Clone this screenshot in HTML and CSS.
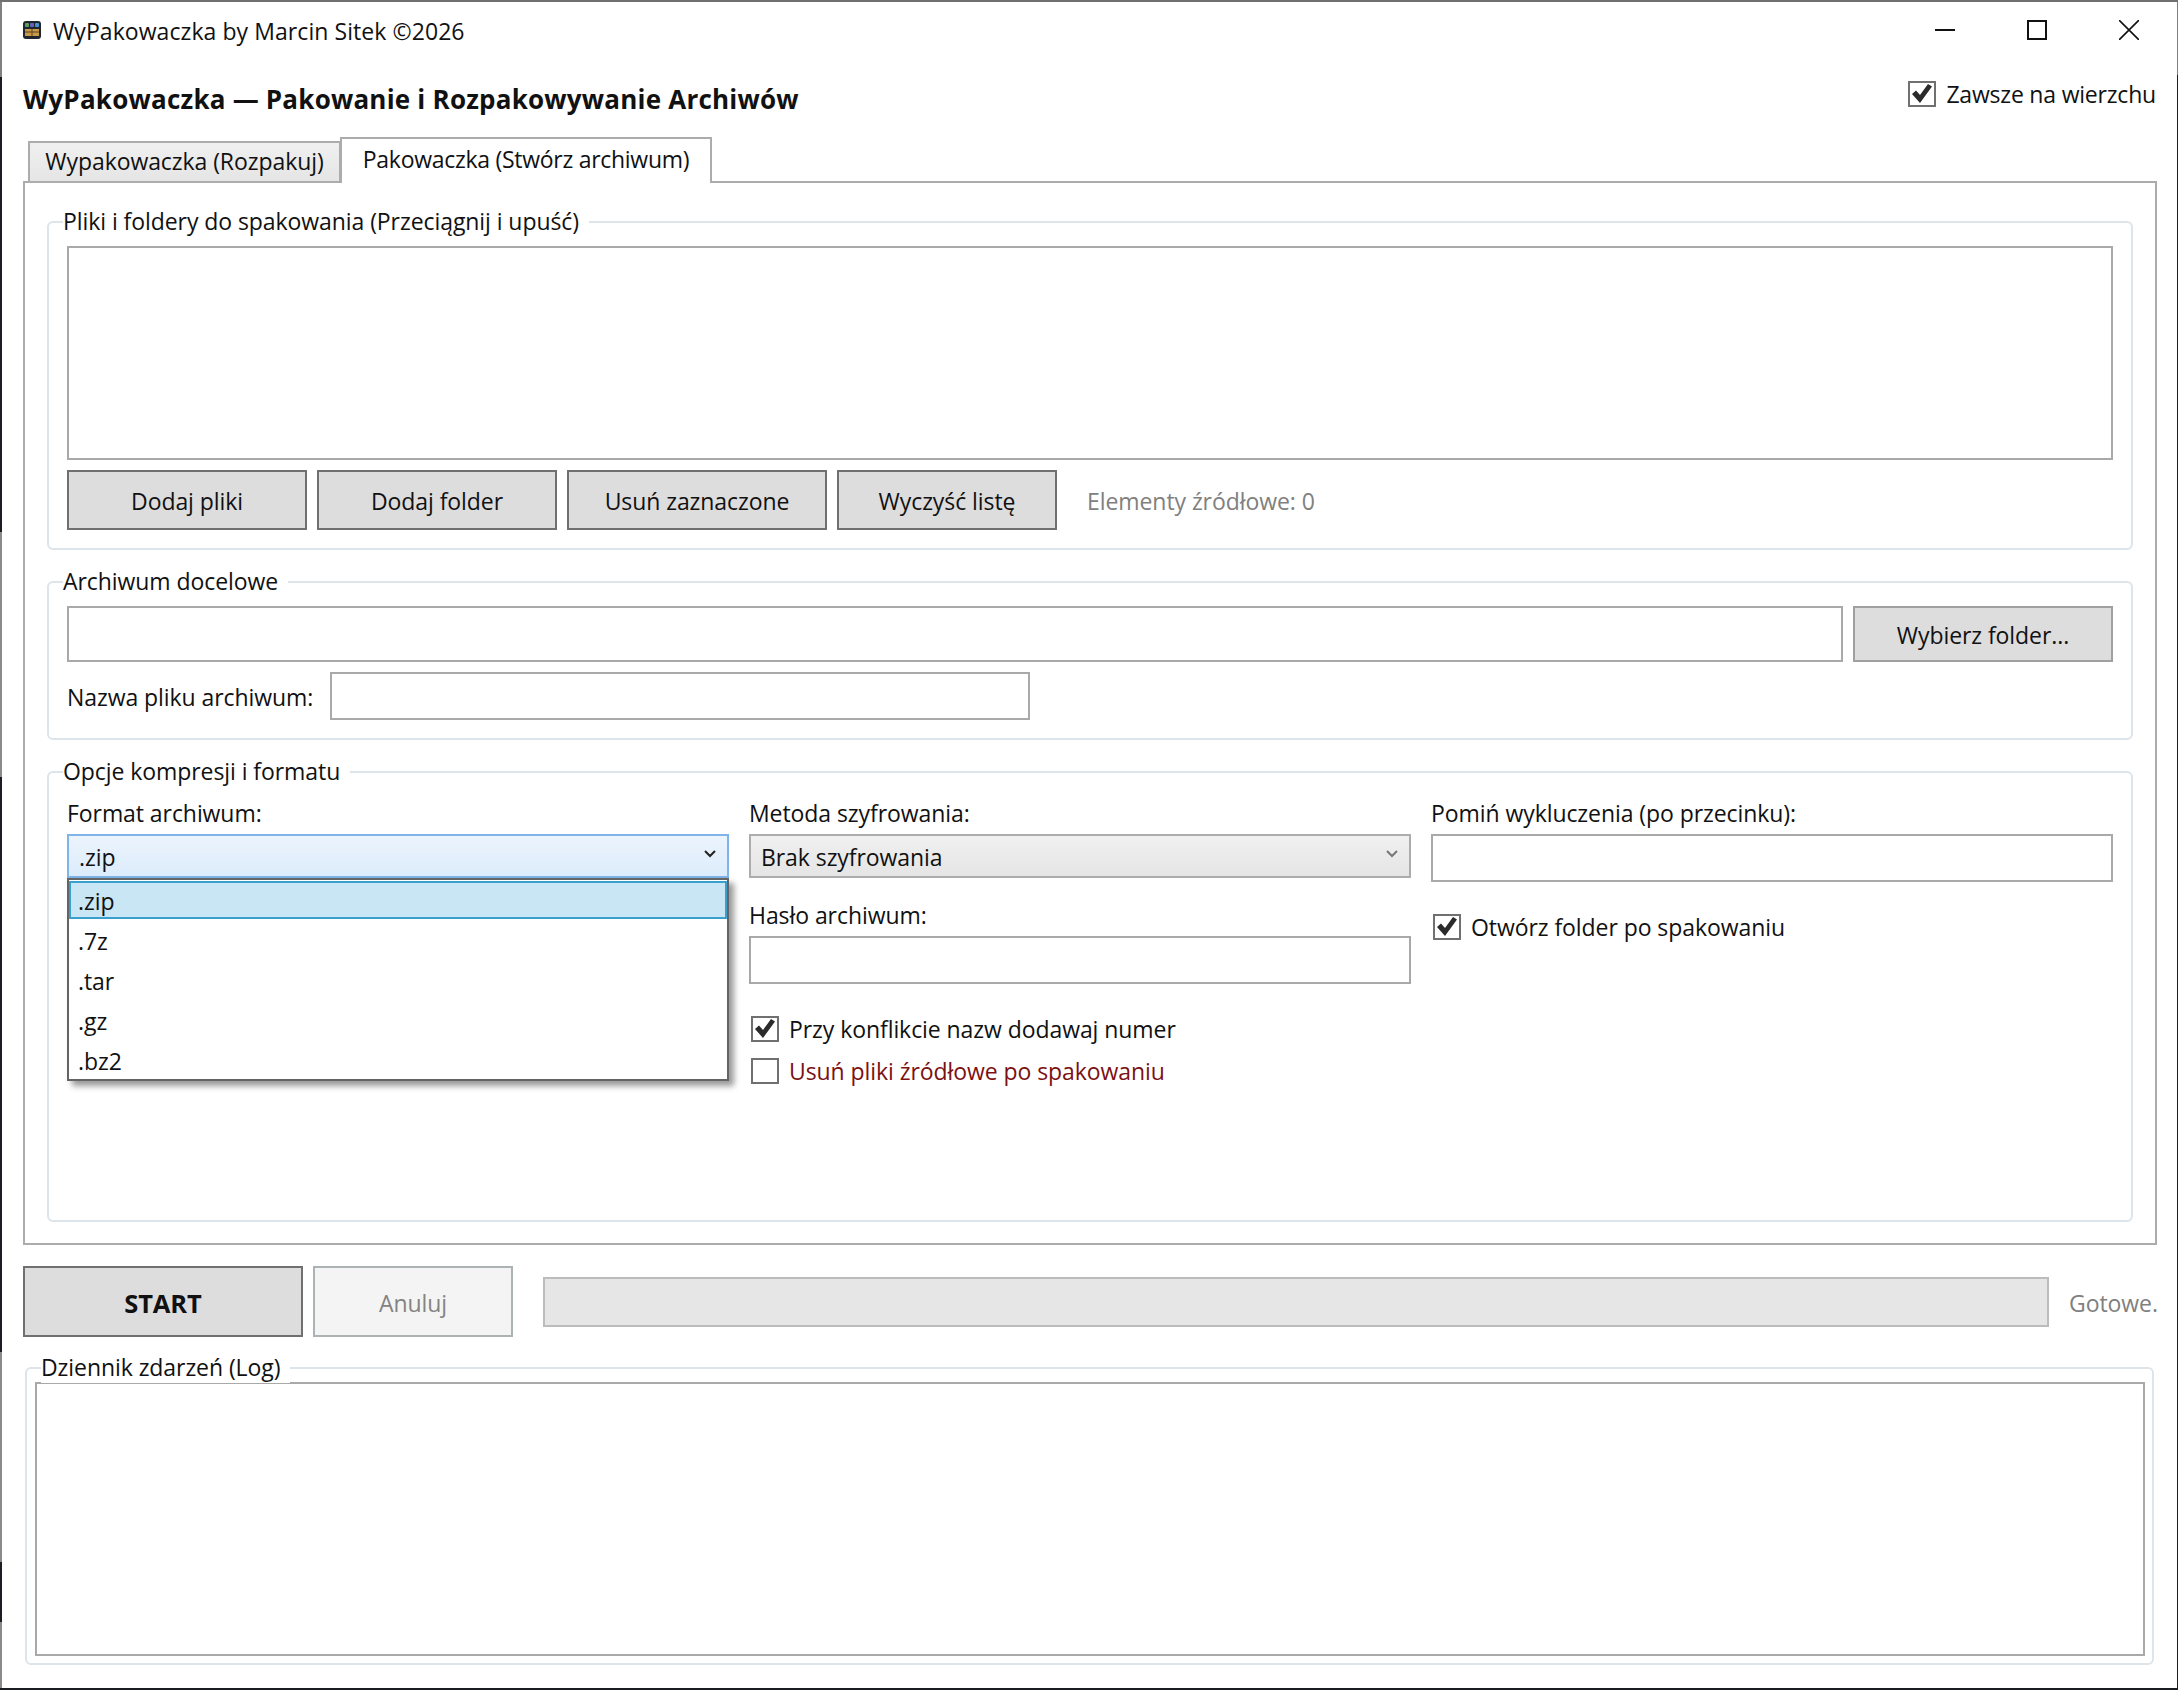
FILE: index.html
```html
<!DOCTYPE html>
<html lang="pl">
<head>
    <meta charset="UTF-8">
    <title>WyPakowaczka by Marcin Sitek ©2026</title>
    <link rel="stylesheet" href="styles.css">
</head>
<body>
    <div class="window">
        <div class="titlebar">
            <svg class="app-icon" width="18" height="18" viewBox="0 0 18 18">
                <rect width="18" height="18" rx="3" fill="#20262e"/>
                <rect x="2" y="2" width="4" height="4" rx="1" fill="#58a05a"/>
                <rect x="7" y="2" width="4" height="4" rx="1" fill="#6a5fc0"/>
                <rect x="12" y="2" width="4" height="4" rx="1" fill="#4a8fd0"/>
                <rect x="2" y="8" width="14" height="7" fill="#c89a48"/>
                <path d="M2 11h14M9 8v7" stroke="#5a4520" stroke-width="1"/>
            </svg>
            <span class="title-text">WyPakowaczka by Marcin Sitek ©2026</span>
            <div class="win-controls">
                <span class="win-btn">
                    <svg width="20" height="20" viewBox="0 0 20 20"><path d="M0 10h20" stroke="#111" stroke-width="2"/></svg>
                </span>
                <span class="win-btn">
                    <svg width="20" height="20" viewBox="0 0 20 20"><rect x="1" y="1" width="18" height="18" fill="none" stroke="#111" stroke-width="2"/></svg>
                </span>
                <span class="win-btn">
                    <svg width="20" height="20" viewBox="0 0 20 20"><path d="M0 0l20 20M20 0L0 20" stroke="#111" stroke-width="1.6"/></svg>
                </span>
            </div>
        </div>

        <header class="app-header">
            <h1>WyPakowaczka — Pakowanie i Rozpakowywanie Archiwów</h1>
            <label class="check top-check">
                <span class="box"><svg width="22" height="20" viewBox="0 0 22 20"><path d="M1 10l4-3.5 4 4.5 8-11 4 2.5-12 16.5z" fill="#2b2b2b"/></svg></span>
                Zawsze na wierzchu
            </label>
        </header>

        <div class="tabs">
            <div class="tab">Wypakowaczka (Rozpakuj)</div>
            <div class="tab active">Pakowaczka (Stwórz archiwum)</div>
        </div>

        <main class="panel">
            <section class="group group-source">
                <div class="group-title">Pliki i foldery do spakowania (Przeciągnij i upuść)</div>
                <div class="listbox"></div>
                <div class="button-row">
                    <button class="btn w240">Dodaj pliki</button>
                    <button class="btn w240">Dodaj folder</button>
                    <button class="btn w260">Usuń zaznaczone</button>
                    <button class="btn w220">Wyczyść listę</button>
                    <span class="muted source-count">Elementy źródłowe: 0</span>
                </div>
            </section>

            <section class="group group-target">
                <div class="group-title">Archiwum docelowe</div>
                <div class="target-row">
                    <input class="field target-path" type="text">
                    <button class="btn browse">Wybierz folder...</button>
                </div>
                <div class="name-row">
                    <label>Nazwa pliku archiwum:</label>
                    <input class="field name-input" type="text">
                </div>
            </section>

            <section class="group group-options">
                <div class="group-title">Opcje kompresji i formatu</div>
                <div class="options-grid">
                    <div class="col col-format">
                        <label class="field-label">Format archiwum:</label>
                        <div class="combo combo-open">
                            <span>.zip</span>
                            <svg width="12" height="8" viewBox="0 0 12 8"><path d="M1 1l5 5 5-5" fill="none" stroke="#222" stroke-width="2"/></svg>
                        </div>
                        <div class="dropdown">
                            <div class="drop-item selected">.zip</div>
                            <div class="drop-item">.7z</div>
                            <div class="drop-item">.tar</div>
                            <div class="drop-item">.gz</div>
                            <div class="drop-item">.bz2</div>
                        </div>
                    </div>
                    <div class="col">
                        <label class="field-label">Metoda szyfrowania:</label>
                        <div class="combo">
                            <span>Brak szyfrowania</span>
                            <svg width="12" height="8" viewBox="0 0 12 8"><path d="M1 1l5 5 5-5" fill="none" stroke="#777" stroke-width="2"/></svg>
                        </div>
                        <label class="field-label second-label">Hasło archiwum:</label>
                        <input class="field password" type="text">
                        <label class="check conflict-check">
                            <span class="box"><svg width="22" height="20" viewBox="0 0 22 20"><path d="M1 10l4-3.5 4 4.5 8-11 4 2.5-12 16.5z" fill="#2b2b2b"/></svg></span>
                            Przy konflikcie nazw dodawaj numer
                        </label>
                        <label class="check delete-check">
                            <span class="box"></span>
                            Usuń pliki źródłowe po spakowaniu
                        </label>
                    </div>
                    <div class="col">
                        <label class="field-label">Pomiń wykluczenia (po przecinku):</label>
                        <input class="field exclude" type="text">
                        <label class="check open-check">
                            <span class="box"><svg width="22" height="20" viewBox="0 0 22 20"><path d="M1 10l4-3.5 4 4.5 8-11 4 2.5-12 16.5z" fill="#2b2b2b"/></svg></span>
                            Otwórz folder po spakowaniu
                        </label>
                    </div>
                </div>
            </section>
        </main>

        <div class="action-row">
            <button class="btn start">START</button>
            <button class="btn cancel">Anuluj</button>
            <div class="progress"></div>
            <span class="muted status">Gotowe.</span>
        </div>

        <section class="group group-log">
            <div class="group-title">Dziennik zdarzeń (Log)</div>
            <div class="listbox log-box"></div>
        </section>
    </div>
</body>
</html>
```

FILE: styles.css
```css
* {
    margin: 0;
    padding: 0;
    box-sizing: border-box;
    font-family: 'Open Sans', 'Noto Sans', sans-serif;
}

body {
    background: #1a1d22;
    width: 2178px;
    height: 1690px;
    overflow: hidden;
    color: #111;
    font-size: 23px;
    letter-spacing: -0.07px;
}

/* left and right edges show the desktop behind the window */
.window {
    width: 2178px;
    height: 1690px;
    background:
        linear-gradient(#808080 75px, #1a1d22 75px, #1a1d22 530px, #8a8a8a 530px, #8a8a8a 775px, #1a1d22 775px, #1a1d22 1350px, #8a8a8a 1350px, #8a8a8a 1560px, #1a1d22 1560px, #1a1d22 1620px, #8a8a8a 1620px) left top / 2px 100% no-repeat,
        linear-gradient(#808080 73px, #1a1d22 73px) right top / 1px 100% no-repeat,
        #fff;
    border-top: 2px solid #707070;
    border-bottom: 2px solid #1a1d22;
    padding: 0 1px 0 2px;
    display: flex;
    flex-direction: column;
}

/* title bar */
.titlebar {
    height: 58px;
    flex-shrink: 0;
    display: flex;
    align-items: center;
    padding-left: 21px;
}

.app-icon {
    margin-right: 12px;
    margin-top: -3px;
}

.title-text {
    letter-spacing: 0.07px;
}

.win-controls {
    margin-left: auto;
    display: flex;
    padding-bottom: 2px;
    padding-right: 2px;
}

.win-btn {
    width: 92px;
    display: flex;
    justify-content: center;
}

/* heading */
.app-header {
    height: 77px;
    flex-shrink: 0;
    display: flex;
    justify-content: space-between;
    padding: 0 21px;
}

h1 {
    font-size: 26px;
    font-weight: 700;
    letter-spacing: 0.22px;
    margin-top: 21px;
    line-height: 36px;
}

.top-check {
    margin-top: 20px;
    letter-spacing: -0.2px;
}

/* checkboxes */
.check {
    display: flex;
    align-items: center;
    gap: 10px;
    height: 28px;
    white-space: nowrap;
}

.box {
    width: 28px;
    height: 26px;
    border: 2px solid #707070;
    background: #fff;
    display: flex;
    align-items: center;
    justify-content: center;
    flex-shrink: 0;
}

/* tabs */
.tabs {
    height: 46px;
    flex-shrink: 0;
    display: flex;
    align-items: flex-end;
    padding-left: 26px;
    position: relative;
    z-index: 2;
    margin-bottom: -2px;
}

.tab {
    width: 313px;
    height: 42px;
    text-align: center;
    line-height: 36px;
    border: 2px solid #acacac;
    background: linear-gradient(#f0f0f0, #e5e5e5);
    white-space: nowrap;
}

.tab.active {
    width: 372px;
    margin-left: -1px;
    height: 46px;
    line-height: 41px;
    letter-spacing: -0.28px;
    background: #fff;
    border-bottom: none;
}

.panel {
    height: 1064px;
    flex-shrink: 0;
    margin: 0 20px 0 21px;
    border: 2px solid #acacac;
    padding: 38px 22px 21px 22px;
    display: flex;
    flex-direction: column;
    gap: 31px;
}

/* group boxes */
.group {
    position: relative;
    border: 2px solid #dde4ea;
    border-radius: 6px;
    padding: 23px 18px 0 18px;
}

.group-title {
    position: absolute;
    top: -18px;
    left: 14px;
    line-height: 32px;
    padding-right: 10px;
    background: #fff;
    white-space: nowrap;
}

.group-source {
    height: 329px;
}

.listbox {
    border: 2px solid #a9a9a9;
    height: 214px;
    background: #fff;
}

.button-row {
    margin-top: 10px;
    display: flex;
    align-items: center;
    gap: 10px;
}

.btn {
    height: 60px;
    padding-top: 2px;
    border: 2px solid #707070;
    background: #dddddd;
    color: #111;
    font-size: 23px;
    letter-spacing: -0.07px;
}

.w240 { width: 240px; }
.w260 { width: 260px; }
.w220 { width: 220px; }

.muted {
    color: #808080;
}

.source-count {
    margin-left: 20px;
    margin-top: 2px;
}

.field {
    border: 2px solid #a9a9a9;
    background: #fff;
    display: block;
}

.group-target {
    height: 159px;
}

.target-row {
    display: flex;
    gap: 10px;
}

.target-path {
    flex: 1;
    height: 56px;
}

.browse {
    width: 260px;
    height: 56px;
    border-color: #a0a0a0;
}

.name-row {
    margin-top: 10px;
    display: flex;
    align-items: center;
}

.name-row label {
    width: 263px;
    white-space: nowrap;
    padding-top: 1px;
}

.name-input {
    width: 700px;
    height: 48px;
}

.group-options {
    height: 451px;
    padding-top: 24px;
}

.options-grid {
    display: grid;
    grid-template-columns: 662px 662px 682px;
    column-gap: 20px;
}

.col-format {
    position: relative;
}

.field-label {
    display: block;
    height: 32px;
    line-height: 32px;
    margin-bottom: 5px;
    white-space: nowrap;
}

.second-label {
    margin-top: 21px;
    margin-bottom: 5px;
}

.combo {
    height: 44px;
    border: 2px solid #acacac;
    background: linear-gradient(#f0f0f0, #e5e5e5);
    display: flex;
    align-items: center;
    justify-content: space-between;
    padding: 1px 11px 0 10px;
}

.combo svg {
    margin-top: -6px;
}

.combo-open {
    border-color: #7eb4ea;
    background: linear-gradient(#ecf4fc, #dcecfc);
}

.dropdown {
    position: absolute;
    top: 81px;
    left: 0;
    width: 662px;
    height: 203px;
    background: #fff;
    border: 2px solid #646464;
    box-shadow: 5px 5px 6px rgba(0, 0, 0, 0.4);
    z-index: 5;
}

.drop-item {
    height: 40px;
    line-height: 40px;
    padding-left: 9px;
}

.drop-item.selected {
    height: 38px;
    line-height: 36px;
    padding-left: 7px;
    margin-top: 1px;
    margin-bottom: 2px;
    background: #c9e6f5;
    border: 2px solid #3a9fcc;
}

.password {
    width: 100%;
    height: 48px;
}

.conflict-check {
    margin-top: 31px;
}

.delete-check {
    margin-top: 14px;
    color: #7b1113;
}

.exclude {
    width: 100%;
    height: 48px;
}

.open-check {
    margin-top: 31px;
    margin-left: 2px;
}

.conflict-check, .delete-check {
    margin-left: 2px;
}

/* bottom */
.action-row {
    margin: 21px 21px 0;
    height: 71px;
    flex-shrink: 0;
    display: flex;
    align-items: center;
}

.start {
    width: 280px;
    height: 71px;
    font-size: 25.5px;
    font-weight: 700;
}

.cancel {
    width: 200px;
    height: 71px;
    margin-left: 10px;
    background: #f4f4f4;
    border-color: #adb2b5;
    color: #838383;
}

.progress {
    flex: 1;
    height: 50px;
    margin: 1px 20px 0 30px;
    background: #e6e6e6;
    border: 2px solid #bcbcbc;
}

.status {
    width: 87px;
    white-space: nowrap;
    margin-top: 2px;
}

.group-log {
    margin: 30px 23px 0;
    height: 298px;
    padding: 13px 7px 0 8px;
    flex-shrink: 0;
}

.log-box {
    height: 274px;
}
```
